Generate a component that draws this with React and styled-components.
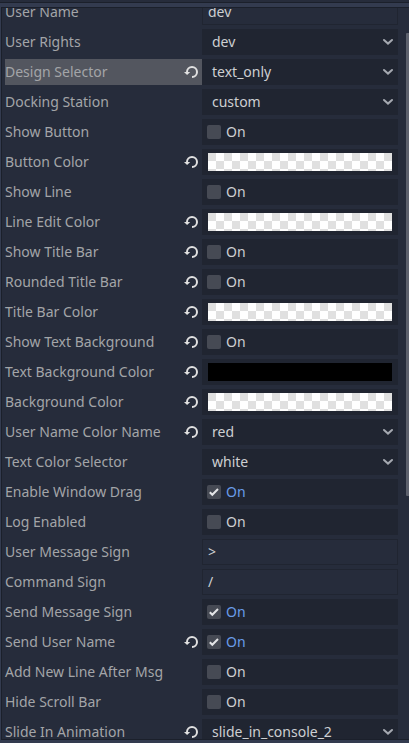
import React from 'react';
import styled, { createGlobalStyle } from 'styled-components';

const Global = createGlobalStyle`
  * { box-sizing: border-box; }
  body { margin: 0; background: #333b4f; overflow: hidden; font: 14px/26px "Noto Sans", sans-serif; }
`;
const Dock = styled.main`
  width: 409px; height: 743px; display: flex; flex-direction: column;
  background: #333b4f;
`;
const Header = styled.div`
  height: 3px; flex: none; background: #262c3b; border-bottom: 1px solid #1b202b; margin-bottom: 4px;
`;
const Panel = styled.section`
  height: 733px; margin-left: 1px; display: flex; overflow: hidden;
  background: #262c3b; border: 1px solid #1b202b; border-right: 0;
`;
const List = styled.div`
  width: 396px; flex: none; padding-left: 3px; margin-top: -9px;
  display: flex; flex-direction: column; gap: 4px;
`;
const Row = styled.div`
  height: 26px; flex: none; display: grid; grid-template: 26px / 197px 196px;
`;
const Label = styled.div`
  display: flex; align-items: center; justify-content: space-between; padding-right: 3px;
  color: #a3a5a8; white-space: nowrap;
  background: ${p => (p.$active ? '#53565f' : 'transparent')};
`;
const Field = styled.div`
  display: flex; align-items: center; background: #202531; color: #cdcfd2;
`;
const LineEdit = styled(Field)`
  background: #262c3b; border: 1px solid #202531; padding-left: 5px; line-height: 24px;
`;
const Select = styled(Field)`
  justify-content: space-between; padding: 0 4px 0 10px;
`;
const Toggle = styled(Field)`
  padding-left: 5px; gap: 5px; color: ${p => (p.$on ? '#699ce8' : '#cdcfd2')};
`;
const Box = styled.span`
  width: 14px; height: 14px; border-radius: 2px; background: #464a54; display: flex;
`;
const ColorField = styled(Field)`padding: 4px 6px;`;
const Swatch = styled.div`
  flex: 1; height: 18px;
  background: ${p => (p.$black ? '#000' : 'repeating-conic-gradient(#fff 0 25%, #e0e0e0 0 50%) 0 0 / 16px 16px')};
`;
const Track = styled.div`flex: 1; padding: 25px 0 0 8px;`;
const Thumb = styled.div`height: 463px; background: #5d616d; border-radius: 1px 0 0 1px;`;

const Revert = () => (
  <svg width="16" height="16" viewBox="0 0 16 16" fill="none">
    <path d="M4 9V8a5 5 0 1 1 5 5" stroke="#e0e0e0" strokeWidth="2" />
    <path d="M1 8h6.2L4.1 11Z" fill="#e0e0e0" />
  </svg>
);
const Chevron = () => (
  <svg width="12" height="12" viewBox="0 0 12 12" fill="none">
    <path d="M2 4 6 7.6 10 4" stroke="#a5a9b1" strokeWidth="2" strokeLinecap="round" />
  </svg>
);
const Tick = () => (
  <svg width="14" height="14" viewBox="0 0 14 14" fill="none">
    <path d="m2.8 7.3 2.5 2.5L11 4" stroke="#e3e4e6" strokeWidth="2" />
  </svg>
);

const rows = [
  ['User Name', 'text', 'dev'],
  ['User Rights', 'select', 'dev'],
  ['Design Selector', 'select', 'text_only', true, true],
  ['Docking Station', 'select', 'custom'],
  ['Show Button', 'check', false],
  ['Button Color', 'color', 'clear', true],
  ['Show Line', 'check', false],
  ['Line Edit Color', 'color', 'clear', true],
  ['Show Title Bar', 'check', false, true],
  ['Rounded Title Bar', 'check', false, true],
  ['Title Bar Color', 'color', 'clear', true],
  ['Show Text Background', 'check', false, true],
  ['Text Background Color', 'color', 'black', true],
  ['Background Color', 'color', 'clear', true],
  ['User Name Color Name', 'select', 'red', true],
  ['Text Color Selector', 'select', 'white'],
  ['Enable Window Drag', 'check', true],
  ['Log Enabled', 'check', false],
  ['User Message Sign', 'text', '>'],
  ['Command Sign', 'text', '/'],
  ['Send Message Sign', 'check', true],
  ['Send User Name', 'check', true, true],
  ['Add New Line After Msg', 'check', false],
  ['Hide Scroll Bar', 'check', false],
  ['Slide In Animation', 'select', 'slide_in_console_2', true],
];

function Value({ kind, value }) {
  if (kind === 'text') return <LineEdit>{value}</LineEdit>;
  if (kind === 'select') return <Select><span>{value}</span><Chevron /></Select>;
  if (kind === 'color') return <ColorField><Swatch $black={value === 'black'} /></ColorField>;
  return <Toggle $on={value}><Box>{value && <Tick />}</Box>On</Toggle>;
}

export default function App() {
  return (
    <>
      <Global />
      <Dock>
        <Header />
        <Panel>
          <List>
            {rows.map(([name, kind, value, changed, active]) => (
              <Row key={name}>
                <Label $active={active}><span>{name}</span>{changed && <Revert />}</Label>
                <Value kind={kind} value={value} />
              </Row>
            ))}
          </List>
          <Track><Thumb /></Track>
        </Panel>
      </Dock>
    </>
  );
}
